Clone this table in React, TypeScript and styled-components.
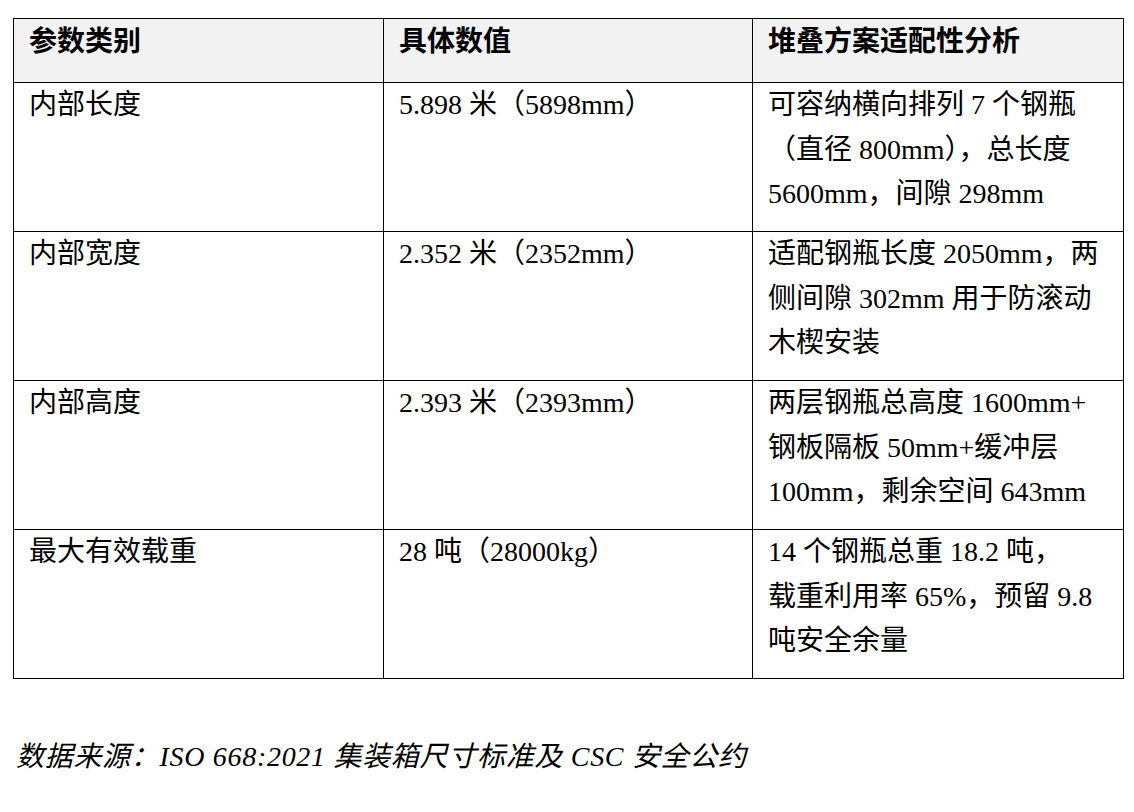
import styled, { createGlobalStyle } from 'styled-components'

const GlobalStyle = createGlobalStyle`
  html, body {
    margin: 0;
    padding: 0;
    background: #ffffff;
  }
  body {
    font-family: 'Liberation Serif', 'Noto Sans CJK SC', serif;
    color: #000000;
  }
`

const Page = styled.main`
  padding: 18px 0 0 13px;
  width: 1134px;
  box-sizing: border-box;
`

const Table = styled.table`
  width: 1110px;
  border-collapse: collapse;
  table-layout: fixed;
  font-size: 28px;
  line-height: 44.5px;
`

const HeadCell = styled.th`
  height: 64px;
  box-sizing: border-box;
  padding: 1px 15px 0 15px;
  border: 1px solid #000;
  background: #f2f2f2;
  font-weight: 700;
  text-align: left;
  vertical-align: top;
`

const Cell = styled.td`
  height: 149px;
  box-sizing: border-box;
  padding: 0 15px;
  border: 1px solid #000;
  vertical-align: top;
`

const Line = styled.span`
  display: block;
  white-space: nowrap;
`

const Caption = styled.p`
  margin: 56px 0 0 3px;
  font-size: 28px;
  line-height: 44px;
  font-style: italic;
  letter-spacing: 0.7px;
`

interface Row {
  name: string
  value: string
  analysis: string[]
}

const rows: Row[] = [
  {
    name: '内部长度',
    value: '5.898 米（5898mm）',
    analysis: ['可容纳横向排列 7 个钢瓶', '（直径 800mm），总长度', '5600mm，间隙 298mm'],
  },
  {
    name: '内部宽度',
    value: '2.352 米（2352mm）',
    analysis: ['适配钢瓶长度 2050mm，两', '侧间隙 302mm 用于防滚动', '木楔安装'],
  },
  {
    name: '内部高度',
    value: '2.393 米（2393mm）',
    analysis: ['两层钢瓶总高度 1600mm+', '钢板隔板 50mm+缓冲层', '100mm，剩余空间 643mm'],
  },
  {
    name: '最大有效载重',
    value: '28 吨（28000kg）',
    analysis: ['14 个钢瓶总重 18.2 吨，', '载重利用率 65%，预留 9.8', '吨安全余量'],
  },
]

export default function App() {
  return (
    <Page>
      <GlobalStyle />
      <Table>
        <colgroup>
          <col style={{ width: 370 }} />
          <col style={{ width: 369 }} />
          <col style={{ width: 371 }} />
        </colgroup>
        <thead>
          <tr>
            <HeadCell>参数类别</HeadCell>
            <HeadCell>具体数值</HeadCell>
            <HeadCell>堆叠方案适配性分析</HeadCell>
          </tr>
        </thead>
        <tbody>
          {rows.map((row) => (
            <tr key={row.name}>
              <Cell>{row.name}</Cell>
              <Cell>{row.value}</Cell>
              <Cell>
                {row.analysis.map((line, i) => (
                  <Line key={i}>{line}</Line>
                ))}
              </Cell>
            </tr>
          ))}
        </tbody>
      </Table>
      <Caption>数据来源：ISO 668:2021 集装箱尺寸标准及 CSC 安全公约</Caption>
    </Page>
  )
}
